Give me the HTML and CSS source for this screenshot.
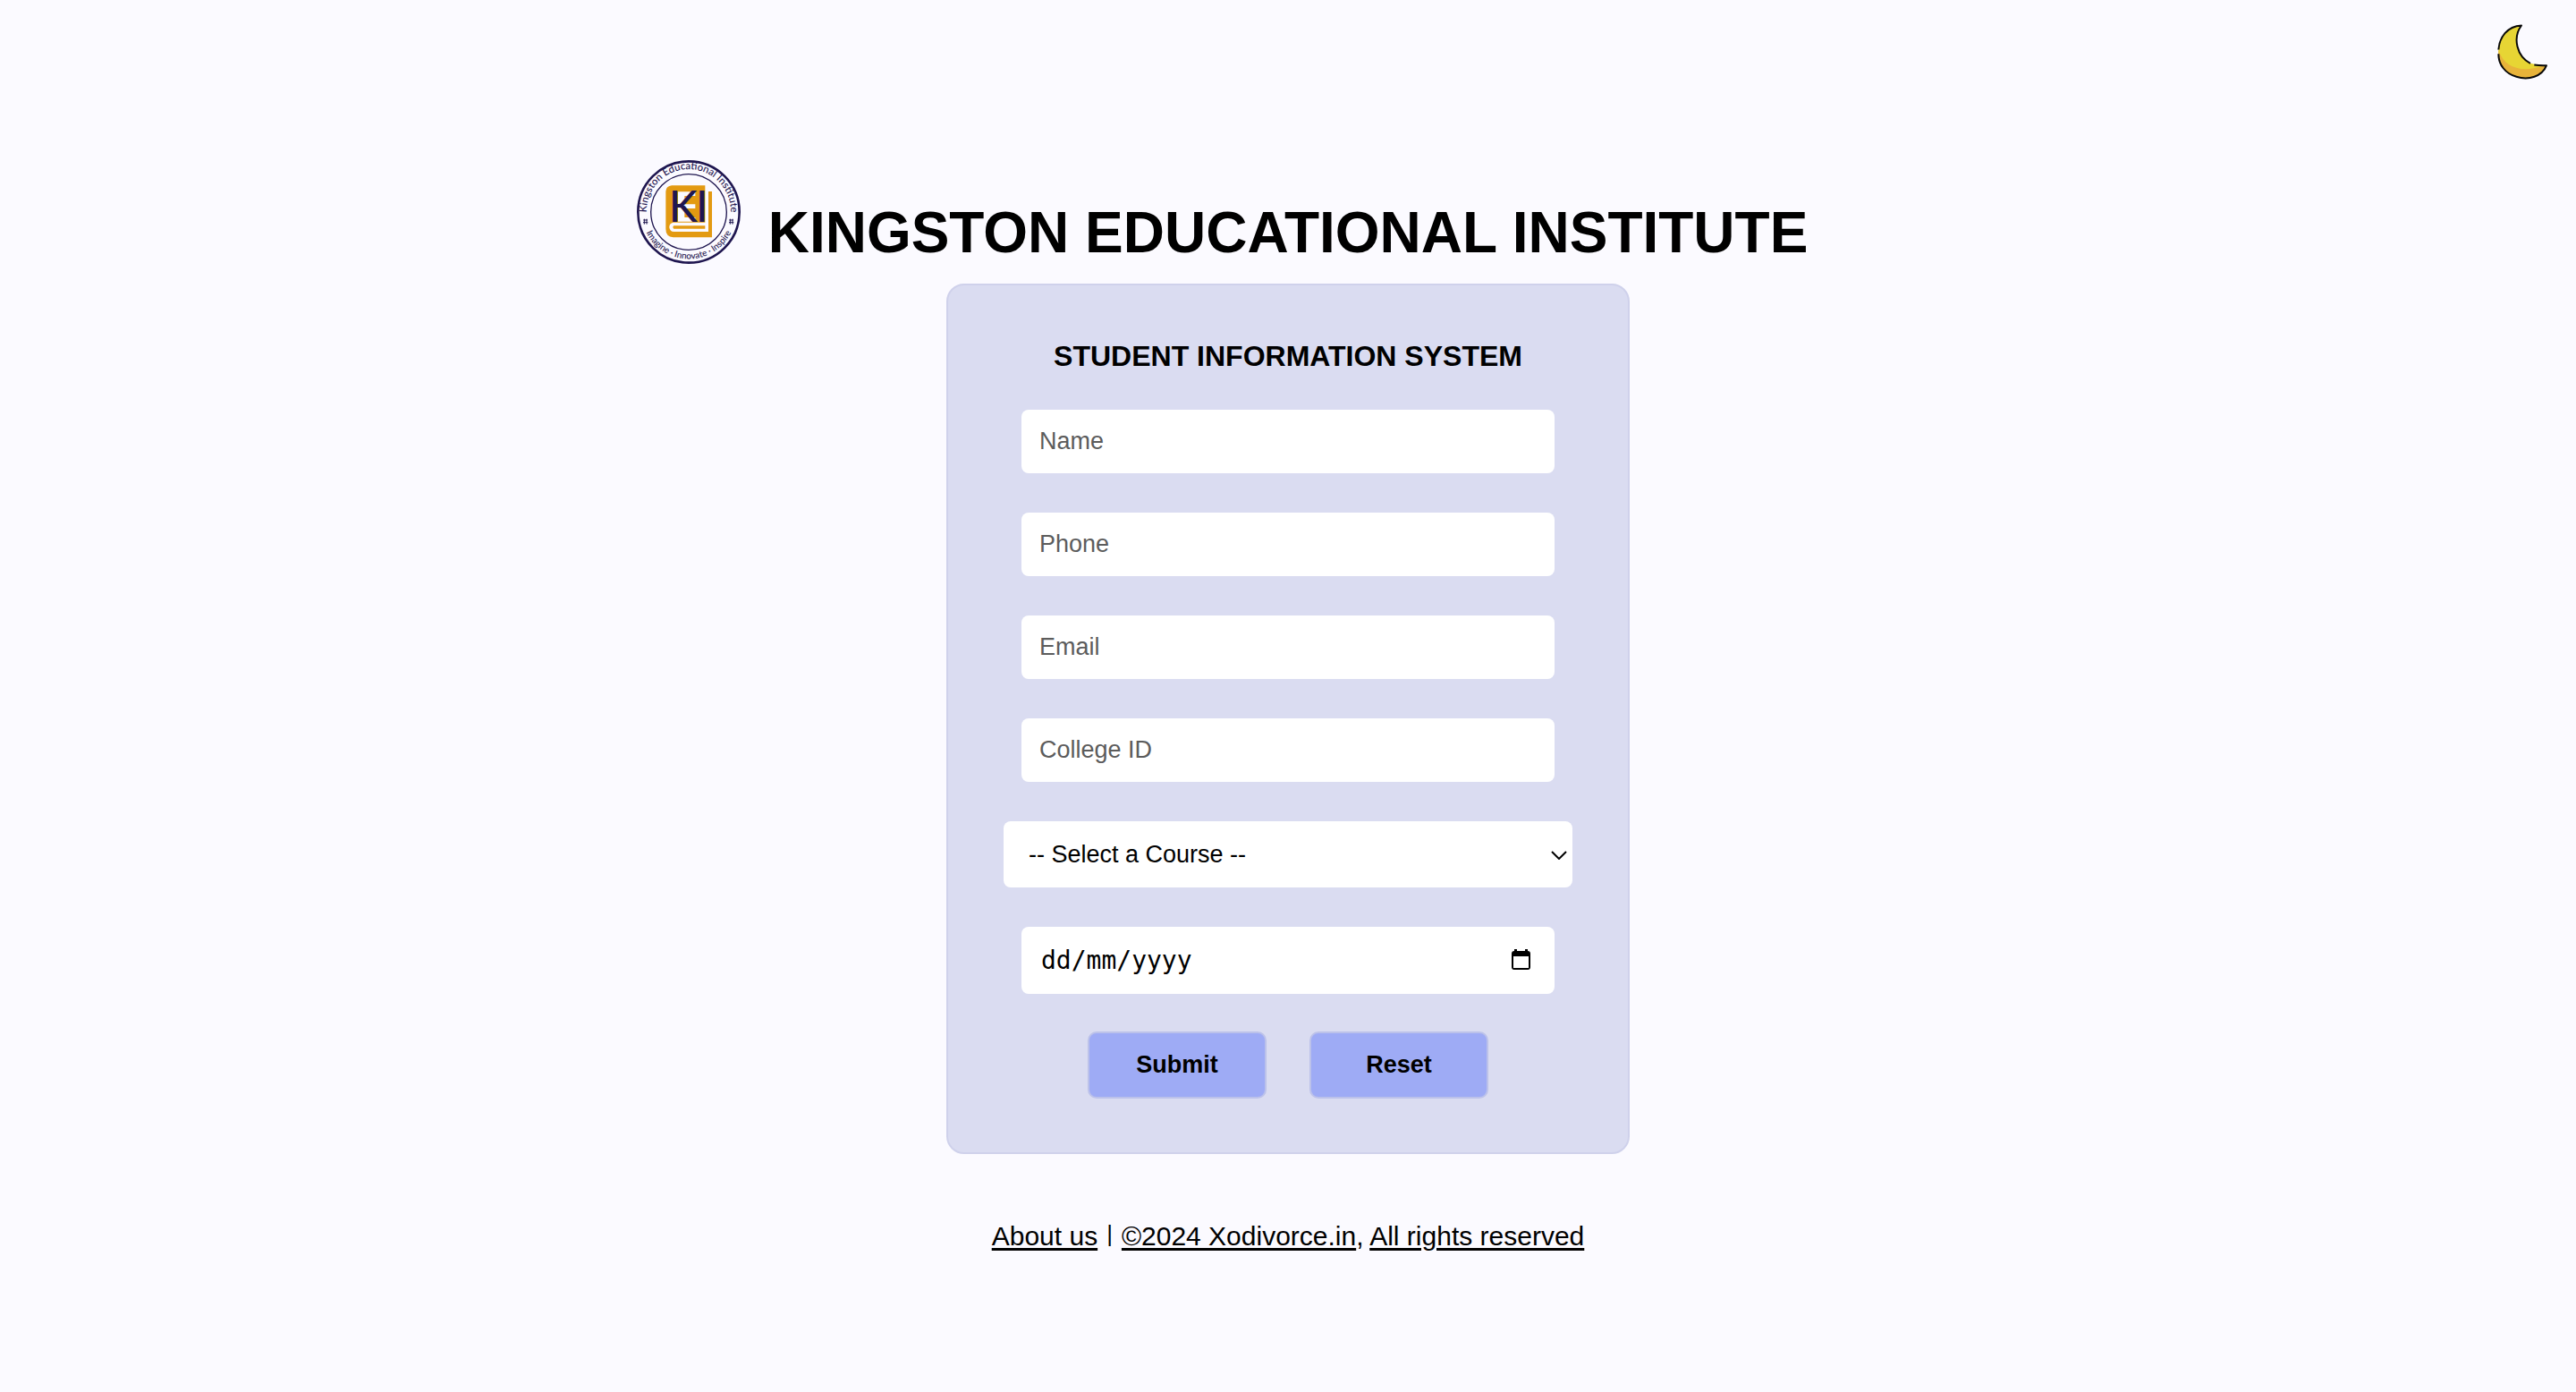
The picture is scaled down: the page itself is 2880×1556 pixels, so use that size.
FILE: index.html
```html
<!DOCTYPE html>
<html lang="en">
<head>
<meta charset="utf-8">
<meta name="viewport" content="width=device-width, initial-scale=1">
<title>Kingston Educational Institute</title>
<link rel="stylesheet" href="styles.css">
</head>
<body>
<button class="theme-toggle" type="button" aria-label="Switch theme">
  <svg viewBox="60 46 180 194" aria-hidden="true">
    <path d="M147 56C99 59 73 95 70 137V151C70 188 93 217 130 228C171 240 216 228 231 190Q210 191 177 183C132 160 116 98 147 56z" fill="#e7d534"/>
    <path d="M70 138c15 52 72 82 150 52l11 0c-15 38-60 50-101 38C93 217 70 188 70 151z" fill="#e8b33a"/>
    <path d="M70 137C73 95 99 59 147 56C116 98 132 160 177 183M190 188Q210 191 231 190C216 228 171 240 130 228C93 217 70 188 70 151" fill="none" stroke="#080808" stroke-width="6" stroke-linejoin="round"/>
  </svg>
</button>
<header class="masthead">
  <svg class="logo" viewBox="30 21 360 360" role="img" aria-label="Kingston Educational Institute logo">
    <defs>
      <path id="arc-top" d="M71 222A141 141 0 1 1 349 222"/>
      <path id="arc-bottom" d="M54 230A159 159 0 0 0 366 230"/>
    </defs>
    <circle class="ring" cx="210" cy="201" r="170" stroke-width="8"/>
    <circle class="ring" cx="210" cy="201" r="127" stroke-width="4"/>
    <text class="logo-arc"><textPath href="#arc-top" startOffset="50%">Kingston Educational Institute</textPath></text>
    <text class="logo-arc logo-motto"><textPath href="#arc-bottom" startOffset="50%">Imagine · Innovate · Inspire</textPath></text>
    <path class="mark" d="M58 228h14M57 236h16M61 224v18M69 224v18M346 228h14M345 236h16M349 224v18M357 224v18"/>
    <path class="book" d="M153 112H265V236H158Q144 239 145 253Q147 267 160 267H276V132H288V286H158Q133 284 133 258V132Q134 114 153 112ZM160 247H265V257H160Q154 252 160 247Z"/>
    <path d="M174 133h58v14h-36v28h36v14h-36v30h36v14h-58z" fill="#fbfaff"/>
    <text class="logo-letters" y="234"><tspan x="143">K</tspan><tspan x="234">I</tspan></text>
  </svg>
  <h1 class="site-title">KINGSTON EDUCATIONAL INSTITUTE</h1>
</header>
<main>
  <form class="card">
    <h2 class="card-title">STUDENT INFORMATION SYSTEM</h2>
    <input class="field" type="text" placeholder="Name" aria-label="Name">
    <input class="field" type="tel" placeholder="Phone" aria-label="Phone">
    <input class="field" type="email" placeholder="Email" aria-label="Email">
    <input class="field" type="text" placeholder="College ID" aria-label="College ID">
    <div class="course">
      <select class="field course-select" aria-label="Course">
        <option>-- Select a Course --</option>
      </select>
      <svg class="chevron" viewBox="0 0 18 10" aria-hidden="true"><path d="M1 1l8 8 8-8"/></svg>
    </div>
    <div class="date">
      <input class="field date-input" type="text" placeholder="dd/mm/yyyy" aria-label="Date">
      <button class="calendar" type="button" aria-label="Open calendar">
        <svg viewBox="0 0 21 24" aria-hidden="true"><path d="M3 0h3v2h9V0h3v2q3 0 3 3v15q0 3-3 3H3q-3 0-3-3V5q0-3 3-3zM2 8v13h17V8z" fill-rule="evenodd"/></svg>
      </button>
    </div>
    <div class="actions">
      <button class="action" type="submit">Submit</button>
      <button class="action" type="reset">Reset</button>
    </div>
  </form>
</main>
<footer class="footer">
  <a href="#about">About us</a><span class="divider">|</span><span><a href="#copyright">©2024 Xodivorce.in</a>, <a href="#rights">All rights reserved</a></span>
</footer>
</body>
</html>
```
FILE: styles.css
```css
* { box-sizing: border-box; }

body {
  margin: 0;
  padding: 177px 32px 32px;
  background: #fbfaff;
  color: #000;
  font-family: "Liberation Sans", Arial, sans-serif;
}

button { padding: 0; font: inherit; color: inherit; cursor: pointer; }

.theme-toggle {
  position: absolute;
  top: 25px;
  right: 30px;
  width: 60px;
  height: 65px;
  border: 0;
  background: none;
}
.theme-toggle svg { display: block; width: 100%; height: 100%; }

.masthead {
  display: grid;
  grid-template-columns: 1fr auto 1fr;
  column-gap: 29px;
}
.logo { width: 120px; height: 120px; justify-self: end; }
.ring { fill: none; stroke: #1f1650; }
.logo-arc {
  font: 500 34px "Lato", sans-serif;
  fill: #1f1650;
  text-anchor: middle;
}
.logo-motto { font-size: 30px; }
.mark { stroke: #1f1650; stroke-width: 3; }
.book { fill: #e39a12; fill-rule: evenodd; }
.logo-letters { font: 500 144px "Lato", sans-serif; fill: #1f1650; }

.site-title {
  margin: 0;
  padding-top: 46px;
  font-size: 64px;
  line-height: 74px;
}

.card {
  display: flex;
  flex-direction: column;
  gap: 44px;
  width: 100%;
  max-width: 764px;
  margin: 20px auto 0;
  padding: 63px 82px 60px;
  border: 2px solid #cfd1eb;
  border-radius: 20px;
  background: #dadcf1;
}
.card-title {
  margin: 0;
  font-size: 32px;
  line-height: 32px;
  text-align: center;
}
.field {
  width: 100%;
  height: 71px;
  padding: 0 20px;
  border: 0;
  border-radius: 8px;
  background: #fff;
  color: #000;
  font: 27px "Liberation Sans", Arial, sans-serif;
}
.field::placeholder { color: #5c5c5c; opacity: 1; }

.course { position: relative; margin: 0 -20px; }
.course-select { display: block; height: 74px; padding: 0 28px; appearance: none; }
.chevron {
  position: absolute;
  top: 33px;
  right: 6px;
  width: 18px;
  height: 10px;
  fill: none;
  stroke: #000;
  stroke-width: 2;
  pointer-events: none;
}
.date { position: relative; }
.date-input { display: block; height: 75px; padding: 0 22px; font: 28px "DejaVu Sans Mono", monospace; }
.date-input::placeholder { color: #000; }
.calendar {
  position: absolute;
  top: 25px;
  right: 27px;
  width: 21px;
  height: 24px;
  border: 0;
  background: none;
}
.calendar svg { display: block; }

.actions { display: flex; justify-content: center; gap: 48px; margin-top: -2px; }
.action {
  width: 200px;
  height: 75px;
  border: 2px solid #bcc2ea;
  border-radius: 10px;
  background: #9eabf5;
  font-size: 27px;
  font-weight: bold;
}

.footer {
  display: flex;
  justify-content: center;
  gap: 10px;
  margin-top: 75px;
  font-size: 30px;
  line-height: 34px;
}
.footer a { color: inherit; text-underline-offset: 3px; text-decoration-thickness: 3px; }
.divider { font-size: 26px; line-height: 28px; }
```
